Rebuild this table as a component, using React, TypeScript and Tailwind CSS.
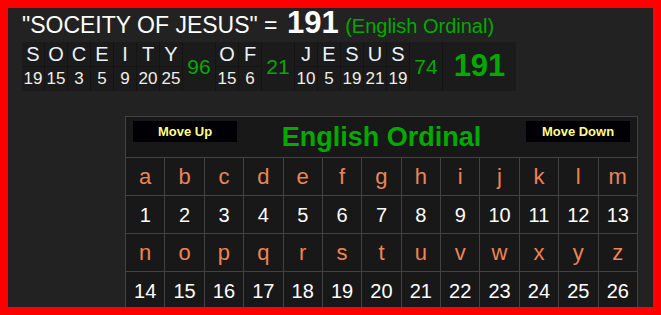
const words = [
  { letters: "SOCEITY", values: [19, 15, 3, 5, 9, 20, 25], sum: 96 },
  { letters: "OF", values: [15, 6], sum: 21 },
  { letters: "JESUS", values: [10, 5, 19, 21, 19], sum: 74 },
];

const alphabet = "abcdefghijklmnopqrstuvwxyz".split("");
const rows = [alphabet.slice(0, 13), alphabet.slice(13)];

export default function App() {
  return (
    <div
      className="w-[661px] h-[315px] overflow-hidden border-8 border-[#ff0000] bg-[#222222] text-white"
      style={{ fontFamily: '"Liberation Sans", Arial, sans-serif' }}
    >
      <div className="pl-[14px] h-[34px] leading-[30px] whitespace-nowrap">
        <span className="text-[23px]">"SOCEITY OF JESUS" = </span>
        <span className="ml-[3px] text-[31px] font-bold">191</span>{" "}
        <span className="ml-[2px] text-[20px] text-[#00aa00]">(English Ordinal)</span>
      </div>

      <div className="ml-[14px] flex w-max bg-[#1b1b1b]">
        {words.map((w) => (
          <div key={w.letters} className="flex">
            {w.letters.split("").map((l, i) => (
              <div key={i} className="w-[23px] flex flex-col border-r border-[#141414]">
                <div className="h-[25px] flex items-center justify-center text-[20px] text-[#eaf2ff] border-b border-[#141414]">
                  {l}
                </div>
                <div className="h-[24px] flex items-center justify-center text-[17px] text-[#f2eee8]">
                  {w.values[i]}
                </div>
              </div>
            ))}
            <div className="w-[33px] h-[49px] flex items-center justify-center text-[21px] text-[#00aa00] border-r border-[#141414]">
              {w.sum}
            </div>
          </div>
        ))}
        <div className="w-[73px] h-[49px] flex items-center justify-center text-[31px] font-bold text-[#00aa00]">
          191
        </div>
      </div>

      <table className="ml-[117px] mt-[25px] w-[513px] table-fixed border-collapse bg-[#181818]">
        <thead>
          <tr>
            <th colSpan={13} className="h-[41px] border border-[#424242] p-0 align-top">
              <div className="flex items-start justify-between px-[7px] pt-[4px]">
                <button className="w-[104px] h-[21px] bg-[#000005] text-[13px] font-bold text-[#ffff88]">
                  Move Up
                </button>
                <span className="text-[27px] leading-[33px] font-bold text-[#00aa00]">English Ordinal</span>
                <button className="w-[104px] h-[21px] bg-[#000005] text-[13px] font-bold text-[#ffff88]">
                  Move Down
                </button>
              </div>
            </th>
          </tr>
        </thead>
        <tbody>
          {rows.map((row, r) => (
            <>
              <tr key={`l${r}`}>
                {row.map((ch) => (
                  <td
                    key={ch}
                    className="h-[38px] border border-[#424242] p-0 text-center text-[22px] text-[#ef8454]"
                  >
                    {ch}
                  </td>
                ))}
              </tr>
              <tr key={`n${r}`}>
                {row.map((ch) => (
                  <td
                    key={ch}
                    className="h-[38px] border border-[#424242] p-0 text-center text-[20px] text-white"
                  >
                    {alphabet.indexOf(ch) + 1}
                  </td>
                ))}
              </tr>
            </>
          ))}
        </tbody>
      </table>
    </div>
  );
}
